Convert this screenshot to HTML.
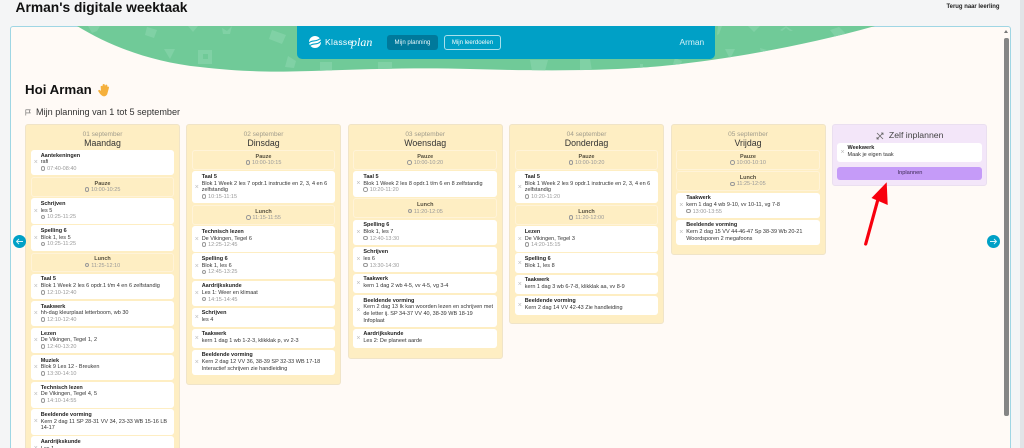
<!DOCTYPE html>
<html lang="nl">
<head>
<meta charset="utf-8">
<title>Arman's digitale weektaak</title>
<style>
*{box-sizing:border-box;margin:0;padding:0}
html,body{width:1024px;height:448px;overflow:hidden;background:#f4f5f6;font-family:"Liberation Sans",sans-serif;color:#222}
.a{position:absolute}
#root{position:absolute;left:0;top:0;width:1024px;height:448px;overflow:hidden;filter:blur(.35px)}
.col{position:absolute;top:123.5px;width:155px;background:#feeec3;border:.5px solid #f0e4c8;border-radius:3px;overflow:hidden}
.head{position:absolute;left:0;right:0;text-align:center}
.date{top:6px;font-size:6.5px;line-height:8px;color:#a09c8c}
.day{top:13.2px;font-size:8.8px;line-height:10px;color:#333}
.list{position:absolute;left:4.7px;right:4.7px;top:25.5px;display:flex;flex-direction:column;gap:1.7px}
.k{position:relative;background:#fff;border-radius:3px;padding:2.65px 3px 2.65px 10px;font-size:5.5px;line-height:6.7px;color:#333;white-space:nowrap}
.k::before{content:"×";position:absolute;left:3px;top:50%;margin-top:-3.5px;font-size:7px;line-height:7px;color:#bbb}
.k b{display:block;color:#222}
.k i,.p i{display:block;font-style:normal;color:#999}
.k.s{min-height:19.4px}
.p{height:19.6px;border:.6px solid #fff3d8;border-radius:3px;text-align:center;font-size:5.5px;line-height:6.5px;padding-top:2.7px;color:#444}
.p b{display:block;font-weight:bold;color:#554f3e}
.c{display:inline-block;width:4.6px;height:4.6px;border:.5px solid #999;border-radius:50%;margin-right:1.8px;vertical-align:-.7px}
.arrow{position:absolute;top:234.5px;width:13px;height:13px;border-radius:50%;background:#00a0c6}
.btn{position:absolute;top:35px;height:14.5px;border-radius:3px;display:flex;align-items:center;justify-content:center;font-size:6.1px;line-height:7px}
</style>
</head>
<body>
<div id="root">
<div class="a" style="left:15.5px;top:0;font-size:13.8px;line-height:15px;font-weight:bold;color:#111">Arman's digitale weektaak</div>
<div class="a" style="left:946.5px;top:3.5px;font-size:5.95px;line-height:7px;font-weight:bold;color:#222">Terug naar leerling</div>
<div class="a" style="left:1020px;top:0;width:4px;height:448px;background:#e2e4e7"></div>

<div class="a" style="left:9.5px;top:25.5px;width:1001px;height:430px;background:#fffaf6;border:.7px solid #9fd6e4;border-radius:3px"></div>

<svg class="a" style="left:0;top:0" width="1024" height="100" viewBox="0 0 1024 100">
<defs><clipPath id="w"><path d="M77 26C108 45 150 62 200 67C235 71 262 72 290 71.500C340 70.500 400 67 470 69C540 71 600 71 650 67C700 63 790 50 875 26Z"/></clipPath></defs>
<path d="M77 26C108 45 150 62 200 67C235 71 262 72 290 71.500C340 70.500 400 67 470 69C540 71 600 71 650 67C700 63 790 50 875 26Z" fill="#70ca98"/>
<g fill="#80d1a5" clip-path="url(#w)">
<path d="M88 26h12l-3 5-5 2z"/><path d="M147 27l10 3-3 8-9-3z"/><path d="M164 49h11l-5 10z"/>
<path d="M198 50h14v14h-14zM203 54v5h5v-5z" fill-rule="evenodd"/><path d="M188 26h10l-5 6z"/><path d="M222 28l5 3 5-5-2 8h-7z"/>
<path d="M272 30l14 5-4 9-13-5z"/><path d="M288 56l8 5-2 7-9-1z"/><path d="M320 62h12v9h-12z"/><path d="M378 62h14v9h-14z"/>
<path d="M530 60h18l-3 11h-13z"/><path d="M580 59h10l2 12h-12z"/><path d="M640 64h3v3h9v2h-12z"/><path d="M675 58l7 3-3 9-7-3z"/>
<path d="M718 26h4l-3 8-2 1z"/><path d="M748 26h12l-6 6z"/><path d="M780 30l6-4 7 5h-3l-4-3-4 3z"/><path d="M725 49h10l-5 10z"/><path d="M760 48l7 2 3 6-8 3z"/><path d="M830 30l9-3 7 7-9 5z"/>
</g>
</svg>

<div class="a" style="left:297px;top:26px;width:418px;height:33px;background:#00a0c6;border-radius:0 0 5px 5px"></div>
<svg class="a" style="left:308px;top:35px" width="14" height="14" viewBox="0 0 14 14"><circle cx="7" cy="7" r="6" fill="#fff"/><path d="M1 8C4 4 8 8 13 3M1.500 11C5 7 9 11 13 6" stroke="#00a0c6" fill="none" stroke-width="1.100"/></svg>
<div class="a" style="left:325px;top:37px;font-size:8.600px;line-height:11px;color:#fff;letter-spacing:.3px">Klasse</div>
<div class="a" style="left:351px;top:35px;font-family:'Liberation Serif',serif;font-style:italic;font-size:12px;line-height:14px;color:#fff">plan</div>
<div class="btn" style="left:387px;width:51px;background:#00799b;color:#e6f6fa">Mijn planning</div>
<div class="btn" style="left:444px;width:57px;border:.6px solid #a8e0ec;color:#f0fafc">Mijn leerdoelen</div>
<div class="a" style="left:679.500px;top:37px;font-size:8.400px;line-height:11px;color:#d5f1f7">Arman</div>

<div class="a" style="left:25px;top:83px;font-size:13.300px;line-height:14px;font-weight:bold;color:#111">Hoi Arman</div>
<svg class="a" style="left:97px;top:83px" width="14" height="14" viewBox="0 0 14 14"><path d="M4 3.500c.6-.6 1.300-.3 1.500.3l.7 2-.3-3.600c0-1 1.500-1.100 1.600-.1l.4 3.400.7-3c.2-.9 1.500-.6 1.400.3l-.6 3.500 1-2c.4-.8 1.500-.3 1.200.5l-1.200 4.400C10 12.200 8 13.500 6 12.800 4 12 2.800 10 1.700 8.300c-.5-.8.500-1.500 1.200-.8l1.500 1.300z" fill="#f5b03c" stroke="#f5b03c" stroke-width=".7"/></svg>
<svg class="a" style="left:24.500px;top:109px" width="6" height="7" viewBox="0 0 6 7"><path d="M.8 6.500V.8h4.400L4.300 2.400l.9 1.500H.8" fill="none" stroke="#666" stroke-width=".6"/></svg>
<div class="a" style="left:36px;top:106.500px;font-size:9.100px;line-height:11px;color:#333">Mijn planning van 1 tot 5 september</div>

<!-- Maandag -->
<div class="col" style="left:25px;width:155px;height:340px">
<div class="head date">01 september</div><div class="head day">Maandag</div>
<div class="list">
<div class="k"><b>Aantekeningen</b>rafi<i><span class="c"></span>07:40-08:40</i></div>
<div class="p"><b>Pauze</b><i><span class="c"></span>10:00-10:25</i></div>
<div class="k"><b>Schrijven</b>les 5<i><span class="c"></span>10:25-11:25</i></div>
<div class="k"><b>Spelling 6</b>Blok 1, les 5<i><span class="c"></span>10:25-11:25</i></div>
<div class="p"><b>Lunch</b><i><span class="c"></span>11:25-12:10</i></div>
<div class="k"><b>Taal 5</b>Blok 1 Week 2 les 6 opdr.1 t/m 4 en 6 zelfstandig<i><span class="c"></span>12:10-12:40</i></div>
<div class="k"><b>Taakwerk</b>hh-dag kleurplaat letterboom, wb 30<i><span class="c"></span>12:10-12:40</i></div>
<div class="k"><b>Lezen</b>De Vikingen, Tegel 1, 2<i><span class="c"></span>12:40-13:20</i></div>
<div class="k"><b>Muziek</b>Blok 9 Les 12 - Breuken<i><span class="c"></span>13:30-14:10</i></div>
<div class="k"><b>Technisch lezen</b>De Vikingen, Tegel 4, 5<i><span class="c"></span>14:10-14:55</i></div>
<div class="k"><b>Beeldende vorming</b>Kern 2 dag 11 SP 28-31 VV 34, 23-33 WB 15-16 LB<br>14-17</div>
<div class="k"><b>Aardrijkskunde</b>Les 1<i><span class="c"></span>14:55-15:25</i></div>
</div></div>

<!-- Dinsdag -->
<div class="col" style="left:186px;height:261.500px">
<div class="head date">02 september</div><div class="head day">Dinsdag</div>
<div class="list">
<div class="p"><b>Pauze</b><i><span class="c"></span>10:00-10:15</i></div>
<div class="k"><b>Taal 5</b>Blok 1 Week 2 les 7 opdr.1 instructie en 2, 3, 4 en 6<br>zelfstandig<i><span class="c"></span>10:15-11:15</i></div>
<div class="p"><b>Lunch</b><i><span class="c"></span>11:15-11:55</i></div>
<div class="k"><b>Technisch lezen</b>De Vikingen, Tegel 6<i><span class="c"></span>12:25-12:45</i></div>
<div class="k"><b>Spelling 6</b>Blok 1, les 6<i><span class="c"></span>12:45-13:25</i></div>
<div class="k"><b>Aardrijkskunde</b>Les 1: Weer en klimaat<i><span class="c"></span>14:15-14:45</i></div>
<div class="k s"><b>Schrijven</b>les 4</div>
<div class="k s"><b>Taakwerk</b>kern 1 dag 1 wb 1-2-3, klikklak p, vv 2-3</div>
<div class="k"><b>Beeldende vorming</b>Kern 2 dag 12 VV 36, 38-39 SP 32-33 WB 17-18<br>Interactief schrijven zie handleiding</div>
</div></div>

<!-- Woensdag -->
<div class="col" style="left:347.700px;height:235px">
<div class="head date">03 september</div><div class="head day">Woensdag</div>
<div class="list">
<div class="p"><b>Pauze</b><i><span class="c"></span>10:00-10:20</i></div>
<div class="k"><b>Taal 5</b>Blok 1 Week 2 les 8 opdr.1 t/m 6 en 8 zelfstandig<i><span class="c"></span>10:20-11:20</i></div>
<div class="p"><b>Lunch</b><i><span class="c"></span>11:20-12:05</i></div>
<div class="k"><b>Spelling 6</b>Blok 1, les 7<i><span class="c"></span>12:40-13:30</i></div>
<div class="k"><b>Schrijven</b>les 6<i><span class="c"></span>13:30-14:30</i></div>
<div class="k s"><b>Taakwerk</b>kern 1 dag 2 wb 4-5, vv 4-5, vg 3-4</div>
<div class="k"><b>Beeldende vorming</b>Kern 2 dag 13 Ik kan woorden lezen en schrijven met<br>de letter ij. SP 34-37 VV 40, 38-39 WB 18-19<br>Infoplaat</div>
<div class="k s"><b>Aardrijkskunde</b>Les 2: De planeet aarde</div>
</div></div>

<!-- Donderdag -->
<div class="col" style="left:509px;height:200.500px">
<div class="head date">04 september</div><div class="head day">Donderdag</div>
<div class="list">
<div class="p"><b>Pauze</b><i><span class="c"></span>10:00-10:20</i></div>
<div class="k"><b>Taal 5</b>Blok 1 Week 2 les 9 opdr.1 instructie en 2, 3, 4 en 6<br>zelfstandig<i><span class="c"></span>10:20-11:20</i></div>
<div class="p"><b>Lunch</b><i><span class="c"></span>11:20-12:00</i></div>
<div class="k"><b>Lezen</b>De Vikingen, Tegel 3<i><span class="c"></span>14:20-15:15</i></div>
<div class="k s"><b>Spelling 6</b>Blok 1, les 8</div>
<div class="k s"><b>Taakwerk</b>kern 1 dag 3 wb 6-7-8, klikklak aa, vv 8-9</div>
<div class="k s"><b>Beeldende vorming</b>Kern 2 dag 14 VV 42-43 Zie handleiding</div>
</div></div>

<!-- Vrijdag -->
<div class="col" style="left:670.500px;height:131px">
<div class="head date">05 september</div><div class="head day">Vrijdag</div>
<div class="list">
<div class="p"><b>Pauze</b><i><span class="c"></span>10:00-10:10</i></div>
<div class="p"><b>Lunch</b><i><span class="c"></span>11:25-12:05</i></div>
<div class="k"><b>Taakwerk</b>kern 1 dag 4 wb 9-10, vv 10-11, vg 7-8<i><span class="c"></span>13:00-13:55</i></div>
<div class="k"><b>Beeldende vorming</b>Kern 2 dag 15 VV 44-46-47 Sp 38-39 Wb 20-21<br>Woordsporen 2 megafoons</div>
</div></div>

<!-- Zelf inplannen -->
<div class="col" style="left:831.700px;height:62.300px;background:#f3e6f9;border-color:#eadff0">
<div class="a" style="left:0;right:0;top:5px;padding-left:14px;text-align:center;font-size:8.700px;line-height:11px;color:#444">Zelf inplannen</div>
<svg class="a" style="left:43px;top:7px" width="8" height="8" viewBox="0 0 8 8"><path d="M1 1l6 6M7 1L1 7M5 1h2v2M1 5v2h2" fill="none" stroke="#666" stroke-width=".8"/></svg>
<div class="a k" style="left:4.800px;top:18px;width:145px;height:19.700px"><b>Weekwerk</b>Maak je eigen taak</div>
<div class="a" style="left:4.800px;top:42px;width:145px;height:13.300px;background:#c59bf8;border-radius:3px;text-align:center;font-size:5.700px;line-height:13.300px;color:#3d2a55">Inplannen</div>
</div>

<!-- Scrollbar -->
<div class="a" style="left:1003.800px;top:38px;width:4.800px;height:378px;background:#858585;border-radius:2px"></div>
<div class="a" style="left:1003.500px;top:30px;width:0;height:0;border-left:2.700px solid transparent;border-right:2.700px solid transparent;border-bottom:3.500px solid #777"></div>

<!-- Arrows -->
<div class="arrow" style="left:12.500px"><svg width="13" height="13" viewBox="0 0 13 13"><path d="M10 6.500H3.500M6 4L3.500 6.500 6 9" fill="none" stroke="#d8f3f9" stroke-width=".9"/></svg></div>
<div class="arrow" style="left:986.500px"><svg width="13" height="13" viewBox="0 0 13 13"><path d="M3 6.500h6.500M7 4l2.500 2.500L7 9" fill="none" stroke="#d8f3f9" stroke-width=".9"/></svg></div>

<!-- Red arrow -->
<svg class="a" style="left:855px;top:175px" width="45" height="80" viewBox="0 0 45 80"><path d="M10.700 69L22.500 26" stroke="#f8000e" stroke-width="3.200" stroke-linecap="round" fill="none"/><path d="M31.700 7.300L16.500 23 32.700 30z" fill="#f8000e"/></svg>
</div>
</body>
</html>
